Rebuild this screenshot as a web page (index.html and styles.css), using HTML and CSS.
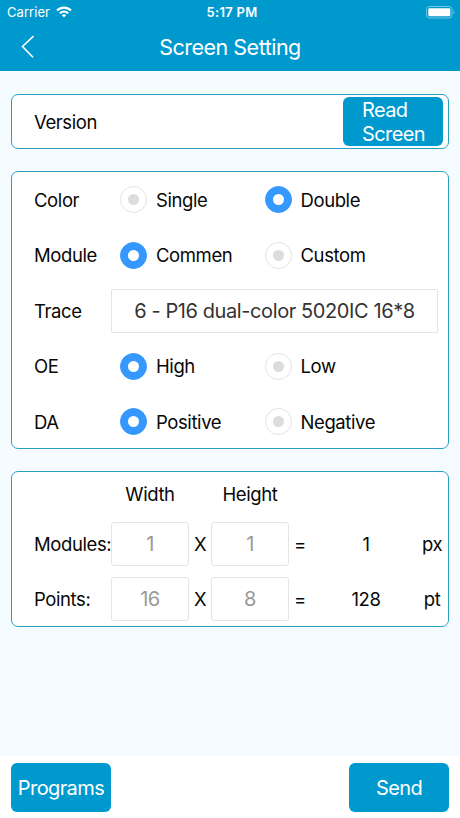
FILE: index.html
```html
<!DOCTYPE html>
<html lang="en">
<head>
<meta charset="utf-8">
<title>Screen Setting</title>
<link rel="stylesheet" href="styles.css">
</head>
<body>
<header class="header">
  <div class="status">
    <div class="carrier"><span>Carrier</span>
      <svg class="wifi" viewBox="0 0 16 12"><g fill="none" stroke="#fff" stroke-width="2.1"><path d="M1 4.5C5 .6 11 .6 15 4.5"/><path d="M3.8 7.3c2.4-2.2 6-2.2 8.4 0"/></g><path fill="#fff" d="M5.7 9.1c1.4-1.2 3.2-1.2 4.6 0L8 11.4z"/></svg>
    </div>
    <div class="clock">5:17 PM</div>
    <svg class="battery" viewBox="0 0 29 13"><rect x=".5" y=".5" width="25.5" height="11.5" rx="3" fill="none" stroke="#70c4e4"/><rect x="2.3" y="2.2" width="22" height="8.1" rx="1.2" fill="#fff"/><path d="M27.3 4.5v3.6c1.4-.5 1.4-3.1 0-3.6z" fill="#70c4e4"/></svg>
  </div>
  <div class="nav">
    <svg class="back" viewBox="0 0 14 24"><path d="M12.5 1.2L1.5 11.5 12 22.3" fill="none" stroke="#fff" stroke-width="1.6"/></svg>
    <h1 class="title">Screen Setting</h1>
  </div>
</header>
<main class="main">
  <section class="card version">
    <span class="label">Version</span>
    <button class="button read">Read<br>Screen</button>
  </section>
  <section class="card options">
    <div class="row"><span class="label">Color</span>
      <label class="option"><i class="radio"></i><span>Single</span></label>
      <label class="option"><i class="radio on"></i><span>Double</span></label></div>
    <div class="row"><span class="label">Module</span>
      <label class="option"><i class="radio on"></i><span>Commen</span></label>
      <label class="option"><i class="radio"></i><span>Custom</span></label></div>
    <div class="row"><span class="label">Trace</span>
      <div class="field trace">6 - P16 dual-color 5020IC 16*8</div></div>
    <div class="row"><span class="label">OE</span>
      <label class="option"><i class="radio on"></i><span>High</span></label>
      <label class="option"><i class="radio"></i><span>Low</span></label></div>
    <div class="row"><span class="label">DA</span>
      <label class="option"><i class="radio on"></i><span>Positive</span></label>
      <label class="option"><i class="radio"></i><span>Negative</span></label></div>
  </section>
  <section class="card sizes">
    <div class="row size head"><span></span><span>Width</span><span></span><span>Height</span></div>
    <div class="row size"><span class="label">Modules:</span><div class="field">1</div><span>X</span><div class="field">1</div><span>=</span><span>1</span><span>px</span></div>
    <div class="row size"><span class="label">Points:</span><div class="field">16</div><span>X</span><div class="field">8</div><span>=</span><span>128</span><span>pt</span></div>
  </section>
</main>
<footer class="footer">
  <button class="button">Programs</button>
  <button class="button">Send</button>
</footer>
</body>
</html>
```
FILE: styles.css
```css
* { box-sizing: border-box; }
body {
  margin: 0;
  height: 818px;
  display: flex;
  flex-direction: column;
  background: #fff;
  color: #080808;
  font: 400 18.5px/24px Inter, "Liberation Sans", sans-serif;
  letter-spacing: -.4px;
}
.header { height: 71px; background: #0099ce; color: #fff; }
.status {
  height: 23px;
  padding: 0 5px 0 7px;
  display: grid;
  grid-template-columns: 1fr auto 1fr;
  align-items: center;
  font-size: 13px;
  letter-spacing: .05px;
}
.carrier { display: flex; align-items: center; gap: 6px; }
.wifi { width: 16px; height: 12px; }
.clock { font-weight: 600; letter-spacing: .3px; padding-left: 2px; }
.battery { width: 29px; height: 13px; justify-self: end; }
.nav {
  height: 47px;
  display: grid;
  grid-template-columns: 60px 1fr 60px;
  align-items: center;
}
.back { width: 14px; height: 24px; margin-left: 21px; }
.title { margin: 0; font-size: 21.5px; font-weight: 400; text-align: center; letter-spacing: -.5px; }
.main {
  height: 685px;
  padding: 23px 11px 0;
  display: flex;
  flex-direction: column;
  gap: 22px;
  background: #f5fcff;
}
.card { border: 1.5px solid #2a9fc6; border-radius: 7px; background: #fff; padding-left: 22px; }
.version { height: 55px; display: flex; align-items: center; justify-content: space-between; padding-right: 5px; }
.options { height: 278px; }
.sizes { height: 156px; }
.button {
  width: 100px;
  height: 49px;
  padding: 0;
  border: 0;
  border-radius: 6px;
  background: #0099ce;
  color: #fff;
  font: 400 20px/24px Inter, "Liberation Sans", sans-serif;
  letter-spacing: -.6px;
}
.read { padding: 2px 0 0 19px; text-align: left; line-height: 23.5px; }
.row { height: 55.5px; display: flex; align-items: center; }
.row .label { width: 77px; flex: none; white-space: nowrap; }
.option { width: 144.5px; padding-left: 9px; display: flex; align-items: center; gap: 9px; }
.radio { width: 27px; height: 27px; border: 1px solid #e2e2e2; border-radius: 50%; display: grid; place-items: center; }
.radio::after { content: ""; width: 11px; height: 11px; border-radius: 50%; background: #dcdcdc; }
.on { background: #3598fe; border-color: #3598fe; }
.on::after { background: #fff; }
.field {
  height: 44px;
  border: 1px solid #e4e4e4;
  border-radius: 3px;
  display: grid;
  place-items: center;
  font-size: 20px;
  color: #999;
}
.trace { width: 327px; color: #333; border-radius: 1px; }
.size { display: grid; grid-template-columns: 77px 78px 22px 78px 22px 110px 22px; text-align: center; }
.size .label { text-align: left; }
.head { height: 44px; }
.footer { height: 62px; padding: 7px 11px; display: flex; justify-content: space-between; }
```
